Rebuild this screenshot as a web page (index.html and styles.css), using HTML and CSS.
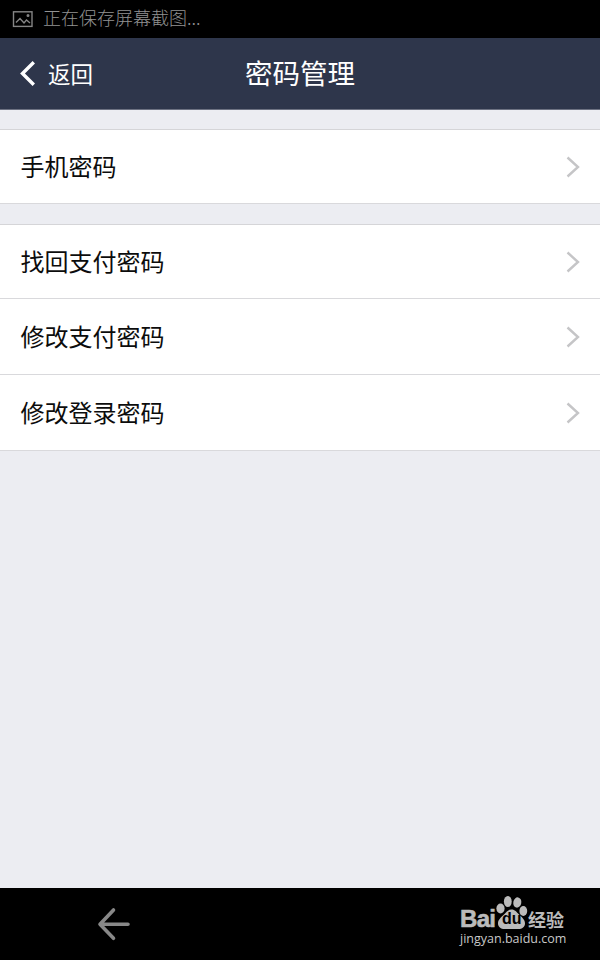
FILE: index.html
```html
<!DOCTYPE html>
<html lang="zh-CN">
<head>
<meta charset="utf-8">
<title>密码管理</title>
<link rel="stylesheet" href="styles.css">
</head>
<body>
<div class="screen">
  <div class="status">
    <svg class="status-icon" width="22" height="18" viewBox="0 0 22 18"><rect x="1.5" y="1.8" width="18.5" height="14.6"/><path d="M4 12.500L8 8.500l4 4.500 2.500-3 3.500 3"/><circle cx="16" cy="5.600" r=".8"/></svg>
    <span>正在保存屏幕截图...</span>
  </div>
  <header class="header">
    <a class="back">
      <svg class="back-icon" width="18" height="28" viewBox="0 0 18 28"><path d="M14.800 3.200L3.500 14.500l11.300 11.300"/></svg>
      <span>返回</span>
    </a>
    <h1 class="title">密码管理</h1>
  </header>
  <main class="content">
    <ul class="group">
      <li class="row row-single"><span>手机密码</span><svg class="chevron" width="16" height="24" viewBox="0 0 16 24"><path d="M2.500 2.500L13 12 2.500 21.500"/></svg></li>
    </ul>
    <ul class="group">
      <li class="row row-first"><span>找回支付密码</span><svg class="chevron" width="16" height="24" viewBox="0 0 16 24"><path d="M2.500 2.500L13 12 2.500 21.500"/></svg></li>
      <li class="row"><span>修改支付密码</span><svg class="chevron" width="16" height="24" viewBox="0 0 16 24"><path d="M2.500 2.500L13 12 2.500 21.500"/></svg></li>
      <li class="row"><span>修改登录密码</span><svg class="chevron" width="16" height="24" viewBox="0 0 16 24"><path d="M2.500 2.500L13 12 2.500 21.500"/></svg></li>
    </ul>
  </main>
  <footer class="nav">
    <svg class="nav-back" width="34" height="34" viewBox="0 0 34 34"><path d="M16.500 3L3 17.300l13.500 14M3 17.300h28"/></svg>
    <div class="brand">
      <div class="logo">
        <span class="logo-bai">Bai</span>
        <span class="paw">
          <svg width="33" height="35" viewBox="0 0 33 35"><ellipse cx="5.500" cy="13.500" rx="4.100" ry="5"/><ellipse cx="12.800" cy="6.500" rx="3.900" ry="5.500"/><ellipse cx="22.300" cy="7.500" rx="4" ry="5.200" transform="rotate(10 22.300 7.500)"/><ellipse cx="28.300" cy="16" rx="3.900" ry="5"/><path d="M16.500 14.500c3.500 0 5 2.500 7.500 5 3 3 6 5 6 9 0 3.500-3 5.500-6.500 5.500h-14C6 34 3 32 3 28.500c0-4 3-6 6-9 2.500-2.500 4-5 7.500-5z"/></svg>
          <span class="paw-text">du</span>
        </span>
        <span class="logo-cn">经验</span>
      </div>
      <div class="url">jingyan.baidu.com</div>
    </div>
  </footer>
</div>
</body>
</html>
```
FILE: styles.css
```css
* { box-sizing: border-box; }
body { margin: 0; font-family: "Noto Sans CJK SC", sans-serif; }
svg { display: block; flex: none; }
.screen { width: 600px; height: 960px; display: flex; flex-direction: column; background: #ecedf2; overflow: hidden; }
.status { height: 38px; flex: none; background: #000; color: #929292; display: flex; align-items: center; gap: 9px; padding-left: 12px; font-size: 18px; line-height: 35px; font-weight: 300; }
.status span { height: 38px; }
.status-icon { fill: none; stroke: #858585; stroke-width: 1.4; }
.header { height: 72px; flex: none; background: #2e364b; border-bottom: 1px solid #6d7282; display: grid; grid-template-columns: 1fr auto 1fr; align-items: center; color: #fff; }
.back { display: flex; align-items: center; gap: 11px; padding-left: 19px; font-size: 22.5px; line-height: 34px; padding-bottom: 1px; }
.back-icon { fill: none; stroke: #fff; stroke-width: 3.4; }
.title { margin: 0; padding-bottom: 4px; font-size: 27.5px; line-height: 40px; font-weight: 400; }
.content { flex: 1; padding-top: 19px; }
.group { list-style: none; margin: 0 0 20px; padding: 0; background: #fff; border-top: 1px solid #d5d5d8; }
.row { height: 76px; display: flex; align-items: center; justify-content: space-between; padding: 0 19px 0 20.5px; border-bottom: 1px solid #d9d9dc; font-size: 24px; line-height: 36px; color: #0c0c0c; }
.row span { padding-bottom: 2px; }
.row-single, .row-first { height: 74px; }
.chevron { fill: none; stroke: #c5c5c7; stroke-width: 2.4; }
.nav { height: 72px; flex: none; background: #000; display: flex; justify-content: space-between; padding: 0 33px 0 97px; }
.nav-back { margin-top: 19px; fill: none; stroke: #888; stroke-width: 3.6; stroke-linecap: round; stroke-linejoin: round; }
.brand { width: 107px; padding-top: 7px; color: #bbb; }
.logo { display: flex; align-items: flex-end; height: 35px; }
.logo-bai { width: 35px; font: 700 24px/24px "Liberation Sans", sans-serif; letter-spacing: -.7px; height: 23px; -webkit-text-stroke: .6px #bbb; }
.paw { position: relative; width: 33px; height: 35px; fill: #bbb; }
.paw-text { position: absolute; left: 7px; top: 15px; color: #000; font: 700 16px/18px "Liberation Sans", sans-serif; }
.logo-cn { font-size: 18px; line-height: 26px; font-weight: 700; height: 24px; white-space: nowrap; }
.url { font: 12.5px/14px "Open Sans", sans-serif; white-space: nowrap; padding-top: 2px; color: #c8c8c8; }
```
